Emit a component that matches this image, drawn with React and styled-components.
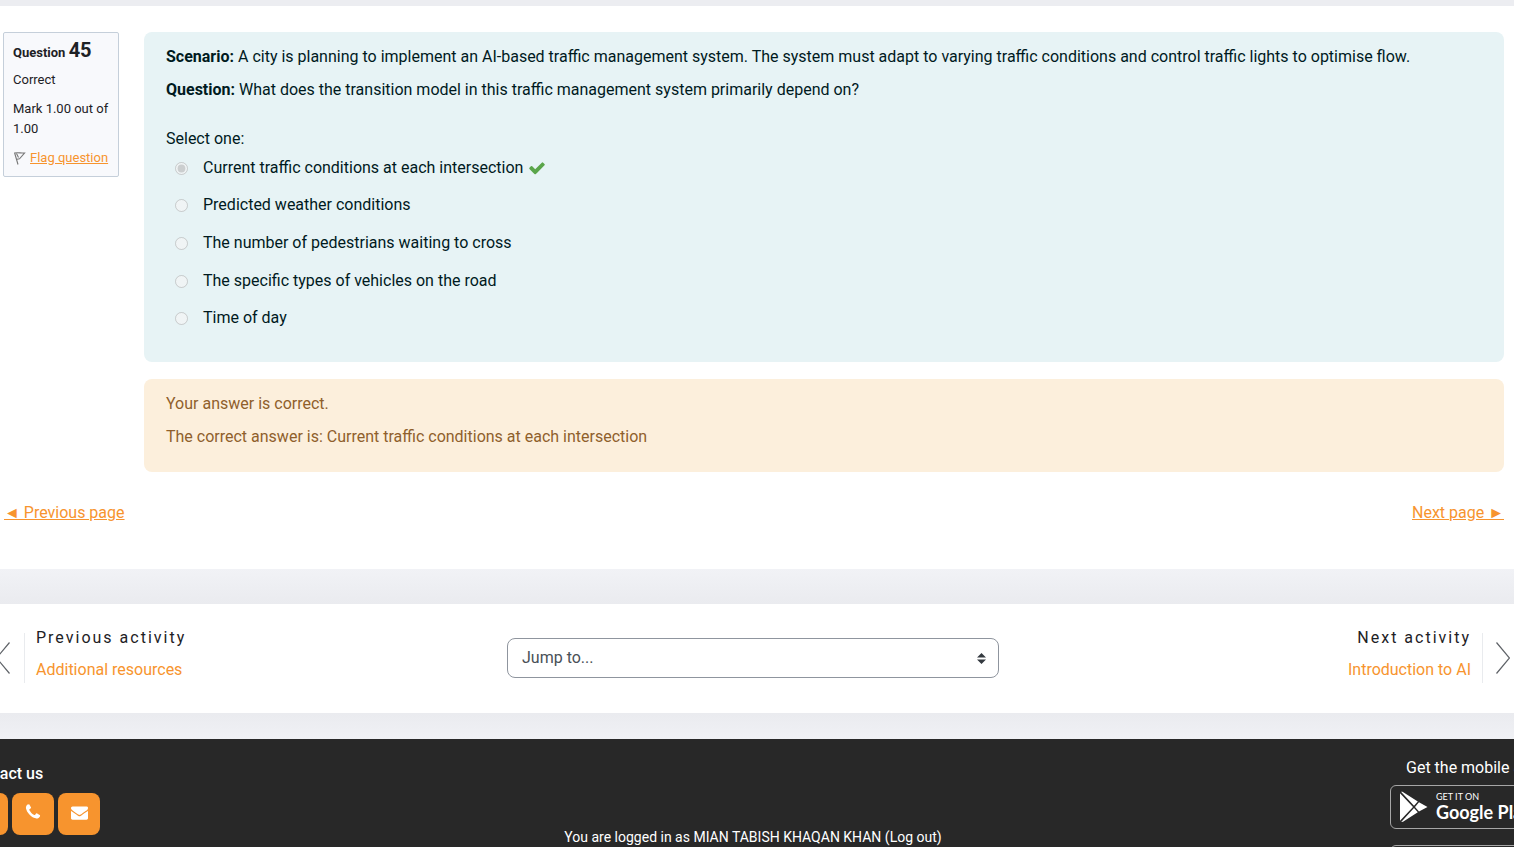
import React from "react";
import styled, { createGlobalStyle } from "styled-components";

const Global = createGlobalStyle`
  *, *::before, *::after { box-sizing: border-box; }
  body {
    margin: 0;
    background: #f2f3f7;
    color: #1d2125;
    font: 16px/24px Roboto, "Liberation Sans", sans-serif;
    overflow-x: hidden;
  }
  p, h2, h3 { margin: 0; }
  a { color: #f7942e; }
`;

const Page = styled.div`
  padding-top: 6px;
  background: #ecedf1;
  height: 100vh;
  overflow: hidden;
`;

const Panel = styled.main`
  background: #fff;
  padding: 26px 10px 44px 3px;
`;

const QuestionRow = styled.section`
  display: flex;
  align-items: flex-start;
  gap: 25px;
`;

const InfoCard = styled.aside`
  flex: 0 0 116px;
  padding: 10px 8px 8px 9px;
  display: flex;
  flex-direction: column;
  gap: 9px;
  background: #f8f9fc;
  border: 1px solid #c5cfda;
  border-radius: 2px;
  font-size: 13px;
  line-height: 20px;
`;

const QuestionTitle = styled.h3`
  margin-bottom: -2px;
  font-size: 13px;
  line-height: 20px;
  font-weight: 700;
  span { font-size: 20px; line-height: 0; }
`;

const FlagLine = styled.div`
  display: flex;
  align-items: center;
  gap: 4px;
  white-space: nowrap;
`;

const Content = styled.div`
  flex: 1;
  min-width: 0;
  display: grid;
  gap: 17px;
`;

const Box = styled.div`
  border-radius: 8px;
  padding: ${(p) => (p.$feedback ? "13px 22px 23px" : "13px 22px 25px")};
  background: ${(p) => (p.$feedback ? "#fcefdc" : "#e7f3f5")};
  color: ${(p) => (p.$feedback ? "#8f5f2c" : "#001a1e")};
  p + p { margin-top: 9px; }
`;

const Answers = styled.fieldset`
  border: 0;
  margin: 27px 0 0;
  padding: 0;
  min-width: 0;
`;

const Legend = styled.legend`
  padding: 0;
  line-height: 20px;
`;

const Options = styled.div`
  display: grid;
  grid-auto-rows: 1fr;
  min-height: 188px;
`;

const Option = styled.div`
  display: flex;
  align-items: center;
  padding-left: 9px;
  input { width: 13px; height: 13px; margin: 1px 15px 0 0; }
  svg { margin-left: 5px; }
`;

const PageLinks = styled.nav`
  display: flex;
  justify-content: space-between;
  margin-top: 29px;
  padding-left: 1px;
`;

const ActivityBand = styled.div`
  padding: 35px 0 26px;
  background: linear-gradient(#f1f2f6, #eaebef 35px, #eaebef calc(100% - 26px), #f0f1f5);
`;

const ActivityNav = styled.nav`
  padding: 22px 4px 23px;
  background: #fff;
`;

const Bleed = styled.div`
  margin: 0 -26px 0 -34px;
`;

const ActivityRow = styled(Bleed)`
  display: grid;
  grid-template-columns: 1fr 492px 1fr;
  align-items: center;
  padding: 0 26px;
`;

const Neighbour = styled.div`
  display: flex;
  align-items: center;
  justify-content: ${(p) => (p.$next ? "flex-end" : "flex-start")};
  text-align: ${(p) => (p.$next ? "right" : "left")};
`;

const Divider = styled.span`
  width: 1px;
  height: 50px;
  background: #e9ebee;
  margin: ${(p) => (p.$next ? "0 13px 0 11px" : "0 11px 0 14px")};
`;

const NeighbourText = styled.div`
  display: grid;
  gap: 8px;
  padding-bottom: 8px;
  h2 { font-size: 16px; line-height: 24px; font-weight: 400; letter-spacing: 2px; }
  a { text-decoration: none; }
`;

const SelectWrap = styled.div`
  position: relative;
  svg { position: absolute; right: 13px; top: 15px; pointer-events: none; }
`;

const JumpSelect = styled.select`
  appearance: none;
  display: block;
  width: 100%;
  height: 40px;
  padding: 0 14px;
  border: 1px solid #8f959e;
  border-radius: 8px;
  background: #fff;
  color: #495057;
  font: inherit;
`;

const Footer = styled.footer`
  background: #282828;
  color: #fff;
  min-height: 260px;
  overflow: hidden;
`;

const FooterGrid = styled(Bleed)`
  display: grid;
  grid-template-columns: 1fr auto 1fr;
  a { color: #fff; }
`;

const Contact = styled.div`
  padding-top: 23px;
  h2 { font-size: 16px; line-height: 24px; font-weight: 500; }
`;

const IconRow = styled.div`
  display: flex;
  gap: 4px;
  margin-top: 7px;
`;

const IconLink = styled.a`
  width: 42px;
  height: 42px;
  display: grid;
  place-items: center;
  padding-bottom: 4px;
  border-radius: 8px;
  background: #f7942e;
`;

const Login = styled.p`
  padding-top: 86px;
  font-size: 14px;
  a { text-decoration: none; }
`;

const Apps = styled.div`
  justify-self: end;
  width: 150px;
  padding-top: 17px;
  p { padding-left: 16px; margin-bottom: 5px; white-space: nowrap; }
`;

const Badge = styled.a`
  display: flex;
  align-items: center;
  gap: 7px;
  height: 44px;
  margin-bottom: 16px;
  padding-left: 8px;
  border: 1px solid #a6a6a6;
  border-radius: 6px;
  background: #282828;
  text-decoration: none;
  white-space: nowrap;
`;

const BadgeText = styled.span`
  display: grid;
  padding-bottom: 2px;
  font-family: Lato, sans-serif;
  small { font-size: 9px; line-height: 11px; }
  b { font-size: 18px; line-height: 20px; font-weight: 700; }
`;

const Glyph = ({ d, size, color }) => (
  <svg width={size} height={size} viewBox="0 0 1792 1792" fill={color} aria-hidden="true">
    <path d={d} />
  </svg>
);

const CHECK =
  "M1671 566q0 40-28 68l-724 724-136 136q-28 28-68 28t-68-28l-136-136-362-362q-28-28-28-68t28-68l136-136q28-28 68-28t68 28l294 295 656-657q28-28 68-28t68 28l136 136q28 28 28 68z";
const PHONE =
  "M1600 1240q0 27-10 70.5t-21 68.5q-21 50-122 106-94 51-186 51-27 0-53-3.5t-57.5-12.5-47-14.5-55.5-20.5-49-18q-98-35-175-83-127-79-264-216t-216-264q-48-77-83-175-3-9-18-49t-20.5-55.5-14.5-47-12.5-57.5-3.5-53q0-92 51-186 56-101 106-122 25-11 68.5-21t70.5-10q14 0 21 3 18 6 53 76 11 19 30 54t35 63.5 31 53.5q3 4 17.5 25t21.5 35.5 7 28.5q0 20-28.5 50t-62 55-62 53-28.5 46q0 9 5 22.5t8.5 20.5 14 24 11.5 19q76 137 174 235t235 174q2 1 19 11.5t24 14 20.5 8.5 22.5 5q18 0 46-28.5t53-62 55-62 50-28.5q14 0 28.5 7t35.5 21.5 25 17.5q25 15 53.5 31t63.5 35 54 30q70 35 76 53 3 7 3 21z";
const MAIL =
  "M1792 710v794q0 66-47 113t-113 47h-1472q-66 0-113-47t-47-113v-794q44 49 101 87 362 246 497 345 57 42 92.5 65.5t94.5 48 110 24.5h2q51 0 110-24.5t94.5-48 92.5-65.5q170-123 498-345 57-39 100-87zm0-294q0 79-49 151t-122 123q-376 261-468 325-10 7-42.5 31t-54 38.5-52 32.5-57.5 27-50 9h-2q-23 0-50-9t-57.5-27-52-32.5-54-38.5-42.5-31q-91-64-262-182.5t-205-142.5q-62-42-117-115.5t-55-136.5q0-78 41.5-130t118.5-52h1472q65 0 112.5 47t47.5 113z";

const Chevron = ({ next }) => (
  <svg width="14" height="32" viewBox="0 0 14 32" fill="none" stroke="#5f6368" strokeWidth="1.2" aria-hidden="true">
    <path d={next ? "M.5 .5 13.500 16 .5 31.5" : "M13.5 .5 .5 16 13.5 31.5"} />
  </svg>
);

const options = [
  "Current traffic conditions at each intersection",
  "Predicted weather conditions",
  "The number of pedestrians waiting to cross",
  "The specific types of vehicles on the road",
  "Time of day",
];

export default function App() {
  return (
    <Page>
      <Global />
      <Panel>
        <QuestionRow>
          <InfoCard>
            <QuestionTitle>
              Question <span>45</span>
            </QuestionTitle>
            <p>Correct</p>
            <p>Mark 1.00 out of 1.00</p>
            <FlagLine>
              <svg width="13" height="14" viewBox="0 0 13 14" fill="none" stroke="#777" strokeWidth="1.1" aria-hidden="true">
                <path d="M1.500 1.500 5 13.500M1.500 2C4 1.200 8 2.200 11.500 2L6.500 7.800 4 8.200M3.500 2.500 5.500 6.500" />
              </svg>
              <a href="#flag">Flag question</a>
            </FlagLine>
          </InfoCard>
          <Content>
            <Box>
              <p>
                <b>Scenario:</b> A city is planning to implement an AI-based traffic management system. The system must
                adapt to varying traffic conditions and control traffic lights to optimise flow.
              </p>
              <p>
                <b>Question:</b> What does the transition model in this traffic management system primarily depend on?
              </p>
              <Answers>
                <Legend>Select one:</Legend>
                <Options>
                  {options.map((text, i) => (
                    <Option key={text}>
                      <input type="radio" name="answer" id={`answer${i}`} disabled defaultChecked={i === 0} />
                      <label htmlFor={`answer${i}`}>{text}</label>
                      {i === 0 && <Glyph d={CHECK} size={18} color="#5aa54a" />}
                    </Option>
                  ))}
                </Options>
              </Answers>
            </Box>
            <Box $feedback>
              <p>Your answer is correct.</p>
              <p>The correct answer is: Current traffic conditions at each intersection</p>
            </Box>
          </Content>
        </QuestionRow>
        <PageLinks>
          <a href="#previous">◄ Previous page</a>
          <a href="#next">Next page ►</a>
        </PageLinks>
      </Panel>

      <ActivityBand>
        <ActivityNav>
          <ActivityRow>
            <Neighbour>
              <Chevron />
              <Divider />
              <NeighbourText>
                <h2>Previous activity</h2>
                <a href="#resources">Additional resources</a>
              </NeighbourText>
            </Neighbour>
            <SelectWrap>
              <JumpSelect aria-label="Jump to...">
                <option>Jump to...</option>
              </JumpSelect>
              <svg width="9" height="11" viewBox="0 0 9 11" fill="#343a40" aria-hidden="true">
                <path d="M0 4.500 4.500 0 9 4.500zM0 6.500 4.500 11 9 6.500z" />
              </svg>
            </SelectWrap>
            <Neighbour $next>
              <NeighbourText>
                <h2>Next activity</h2>
                <a href="#introduction">Introduction to AI</a>
              </NeighbourText>
              <Divider $next />
              <Chevron next />
            </Neighbour>
          </ActivityRow>
        </ActivityNav>
      </ActivityBand>

      <Footer>
        <FooterGrid>
          <Contact>
            <h2>Contact us</h2>
            <IconRow>
              <IconLink href="#website" aria-label="Website" />
              <IconLink href="#phone" aria-label="Phone">
                <Glyph d={PHONE} size={18} color="#fff" />
              </IconLink>
              <IconLink href="#email" aria-label="Email">
                <Glyph d={MAIL} size={17} color="#fff" />
              </IconLink>
            </IconRow>
          </Contact>
          <Login>
            You are logged in as <a href="#profile">MIAN TABISH KHAQAN KHAN</a> (<a href="#logout">Log out</a>)
          </Login>
          <Apps>
            <p>Get the mobile app</p>
            <Badge href="#android">
              <svg width="30" height="32" viewBox="0 0 30 32" fill="#fff" aria-hidden="true">
                <path d="M2 .8 15 14.800 18.800 10.600 3.500 .8zM1 2.200V29.800L14 15.900zM15 17 2.200 31 4 30.800 18.800 21.200zM20 11.300 16 15.900 20 20.500 28.500 15.900z" />
              </svg>
              <BadgeText>
                <small>GET IT ON</small>
                <b>Google Play</b>
              </BadgeText>
            </Badge>
            <Badge href="#ios" aria-label="App Store" />
          </Apps>
        </FooterGrid>
      </Footer>
    </Page>
  );
}
